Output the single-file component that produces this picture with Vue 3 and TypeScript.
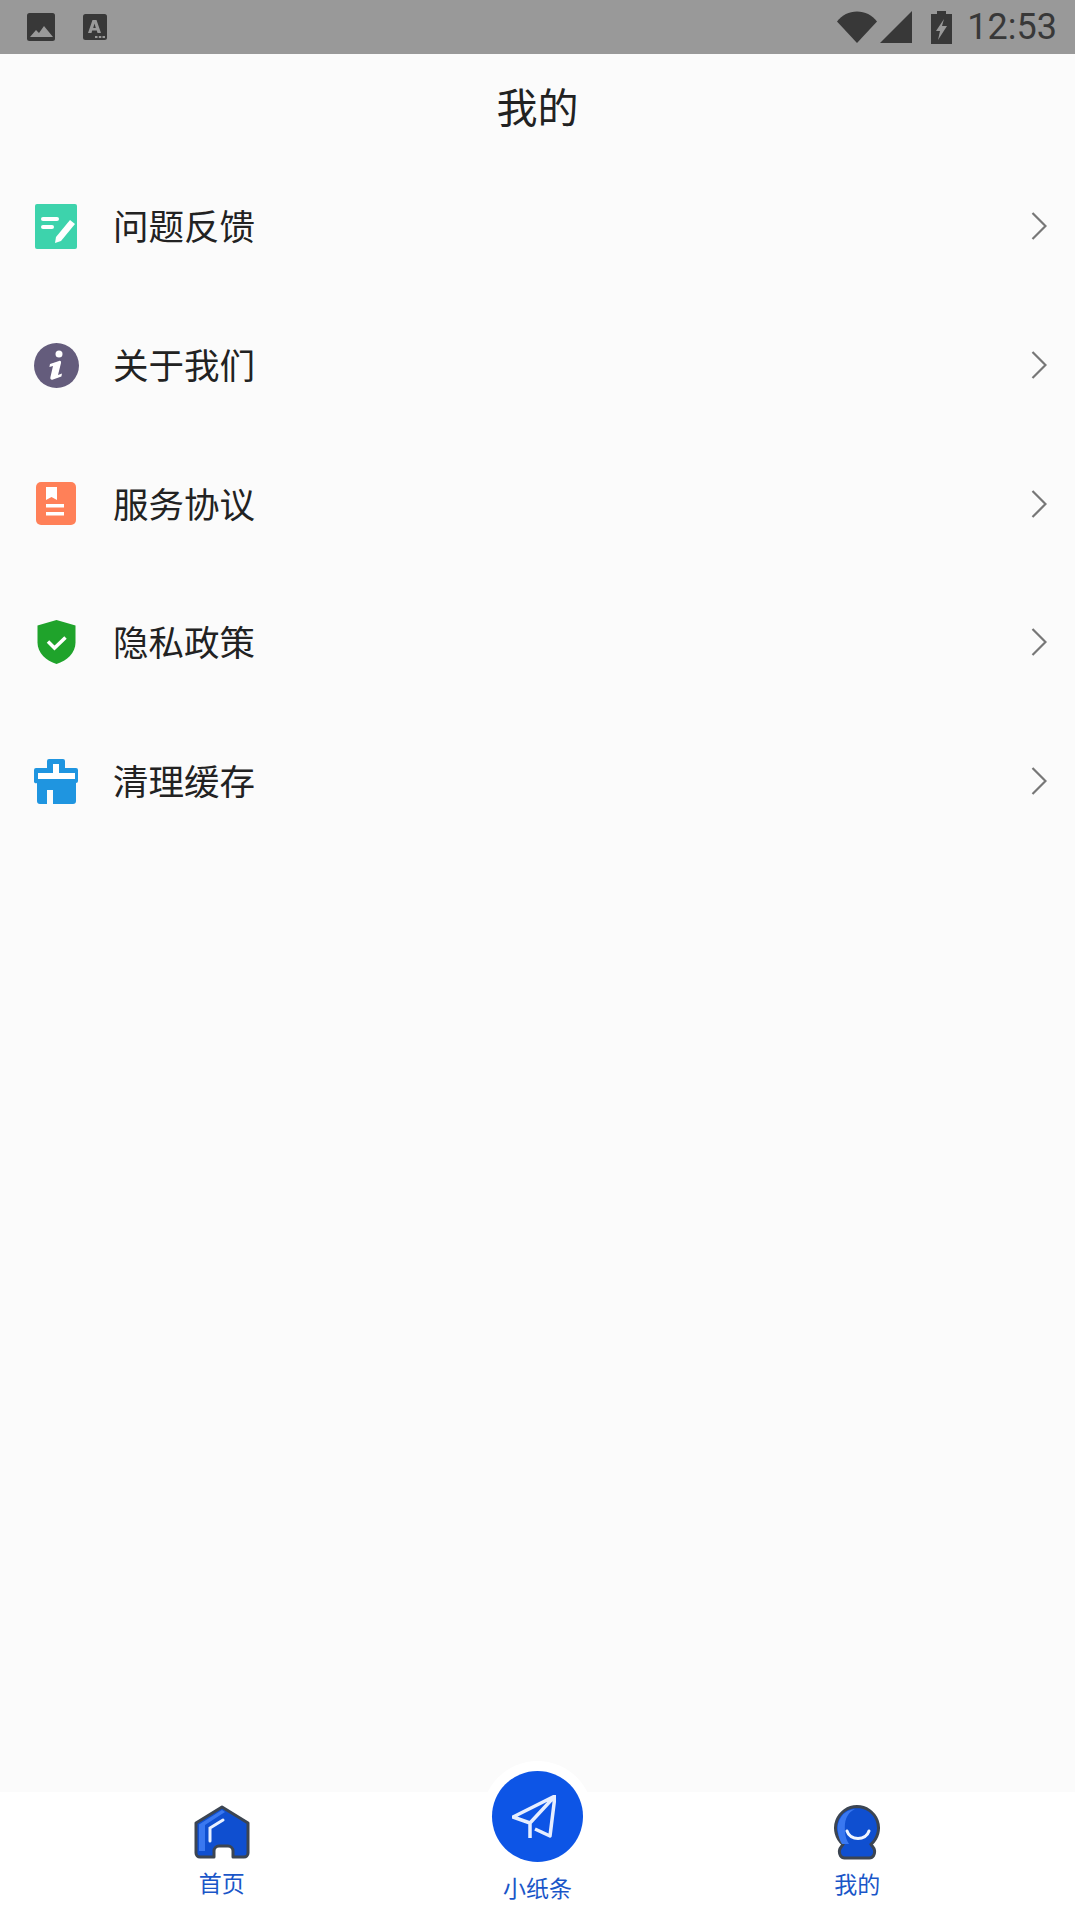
<script setup lang="ts">
const menu = [
  { key: 'feedback', label: '问题反馈' },
  { key: 'about', label: '关于我们' },
  { key: 'terms', label: '服务协议' },
  { key: 'privacy', label: '隐私政策' },
  { key: 'cache', label: '清理缓存' },
]
</script>

<template>
  <div class="page">
    <div class="status-bar">
      <div class="status-left">
        <svg width="28" height="28" viewBox="0 0 28 28">
          <rect width="28" height="28" rx="2.5" fill="#383838" />
          <path d="M3 24l6-7 3 3 5-7 9 11z" fill="#999" />
        </svg>
        <svg width="24" height="26" viewBox="0 0 24 26">
          <rect width="24" height="26" rx="2.5" fill="#383838" />
          <path d="M5 19L9.500 6h4L18 19h-3.500l-.7-2.500H9.200L8.500 19zM10.200 14h2.600l-1.300-4.500z" fill="#999" />
          <path d="M12 22h2.500v2H12zM15.800 22h2.500v2h-2.500zM19.500 22H22v2h-2.500z" fill="#999" />
        </svg>
      </div>
      <div class="status-right">
        <svg width="40" height="32" viewBox="0 0 40 32">
          <path d="M0 10.500C5 4 12 0.500 20 0.500S35 4 40 10.500L20 32z" fill="#383838" />
        </svg>
        <svg class="signal" width="32" height="32" viewBox="0 0 32 32">
          <path d="M32 0v32H0z" fill="#383838" />
        </svg>
        <svg class="battery" width="21" height="33" viewBox="0 0 21 33">
          <path d="M6 0h9v3h6v30H0V3h6z" fill="#383838" />
          <path d="M13 8L5 20h4L7 29l9-14h-5z" fill="#999" />
        </svg>
        <span class="time">12:53</span>
      </div>
    </div>

    <header class="title-bar">我的</header>

    <ul class="menu">
      <li v-for="item in menu" :key="item.key" class="menu-row">
        <span class="menu-icon">
          <svg v-if="item.key === 'feedback'" width="42" height="45" viewBox="0 0 42 45">
            <rect width="42" height="45" rx="2" fill="#3dd3ac" />
            <rect x="6" y="13" width="18" height="4" rx="2" fill="#fff" />
            <rect x="6" y="21" width="13" height="4" rx="2" fill="#fff" />
            <path d="M35 16l5 4-14 17-6 2 1-6z" fill="#fff" />
          </svg>
          <svg v-else-if="item.key === 'about'" width="45" height="45" viewBox="0 0 45 45">
            <circle cx="22.500" cy="22.500" r="22.500" fill="#645c7c" />
            <circle cx="25" cy="11" r="3.500" fill="#fff" />
            <path d="M16 21l9-3c1.500-.5 2.300.5 2 2l-3 12 4-1.500-.6 3-8.400 3c-2 .6-3-.4-2.600-2.200L19 23l-3.600 1z" fill="#fff" />
          </svg>
          <svg v-else-if="item.key === 'terms'" width="40" height="43" viewBox="0 0 40 43">
            <rect width="40" height="43" rx="5" fill="#ff8058" />
            <path d="M10 5h11v13l-5.500-3-5.500 3z" fill="#fff" />
            <rect x="10" y="22" width="18" height="3.500" fill="#fff" />
            <rect x="10" y="30" width="18" height="3.500" fill="#fff" />
          </svg>
          <svg v-else-if="item.key === 'privacy'" width="39" height="44" viewBox="0 0 39 44">
            <path d="M19.500 0l19 5.500v17C38.500 33 30 40.500 19.500 44 9 40.500 0.500 33 0.500 22.500v-17z" fill="#1fa32b" />
            <path d="M11 21.500l6.500 6.500 11-10.500" fill="none" stroke="#fff" stroke-width="3.500" />
          </svg>
          <svg v-else width="45" height="45" viewBox="0 0 45 45">
            <path d="M13 2a2 2 0 0 1 2-2h14a2 2 0 0 1 2 2v7h11a2 2 0 0 1 2 2v11a2 2 0 0 1-2 2v18a3 3 0 0 1-3 3H19V31h-6v14H6a3 3 0 0 1-3-3V24a2 2 0 0 1-3-2V11a2 2 0 0 1 2-2h11z" fill="#1f95e0" />
            <path d="M19 5h6v9h16v6H4v-6h15z" fill="#fff" />
          </svg>
        </span>
        <span class="menu-label">{{ item.label }}</span>
        <svg class="chevron" width="16" height="28" viewBox="0 0 16 28">
          <path d="M1.500 1l13 13-13 13" fill="none" stroke="#777" stroke-width="2.200" />
        </svg>
      </li>
    </ul>

    <nav class="tab-bar">
      <div class="tab">
        <svg width="56" height="54" viewBox="0 0 56 54">
          <path d="M28 2L54 18v30a4 4 0 0 1-4 4H39v-6a5 5 0 0 0-5-5h-9a5 5 0 0 0-5 5v6H6a4 4 0 0 1-4-4V18z" fill="#0f4fd0" stroke="#3c4552" stroke-width="3" stroke-linejoin="round" />
          <path d="M5 46V19.500L28 5l3 2L11 20v26z" fill="#3a78f0" />
          <path d="M16 36V23l13-8" fill="none" stroke="#e8f0ff" stroke-width="3" stroke-linecap="round" />
        </svg>
        <span class="tab-label">首页</span>
      </div>
      <div class="tab tab-center">
        <span class="send-halo">
          <span class="send-btn">
            <svg class="send-plane" width="44" height="44" viewBox="0 0 44 44">
              <path d="M43 1L1 22l17 6zM43 1L18 28v15M23 34l15 7L43 1" fill="none" stroke="#e6eeff" stroke-width="3.500" stroke-linejoin="round" />
            </svg>
          </span>
        </span>
        <span class="tab-label">小纸条</span>
      </div>
      <div class="tab">
        <svg width="46" height="55" viewBox="0 0 46 55">
          <path d="M23 1.500a21.500 21.500 0 0 1 14 37.800c1 2 3 3 3.500 6 .6 4-1.500 7.700-5 7.700h-25c-3.500 0-5.600-3.700-5-7.700.5-3 2.500-4 3.500-6A21.500 21.500 0 0 1 23 1.500z" fill="#0f4fd0" stroke="#3c4552" stroke-width="3" />
          <path d="M4 27A19 19 0 0 1 21 4c-8 4-11 11-10 23 .3 5 2 9 4 12l-7 0C6 36 4.500 32 4 27z" fill="#3a78f0" />
          <path d="M13 26c3 10 19 10 22 0" fill="none" stroke="#f2f6ff" stroke-width="3" stroke-linecap="round" />
        </svg>
        <span class="tab-label">我的</span>
      </div>
    </nav>
  </div>
</template>

<style>
body {
  background: #fbfbfb;
}
</style>

<style scoped>
.page {
  display: flex;
  flex-direction: column;
  height: 1915px;
  background: #fbfbfb;
  font-family: "Noto Sans CJK SC", "Liberation Sans", sans-serif;
  color: #222;
  overflow: hidden;
}
.status-bar {
  height: 54px;
  flex: none;
  display: flex;
  justify-content: space-between;
  background: #999;
  padding: 0 18px 0 27px;
}
.status-left {
  display: flex;
  align-items: center;
  gap: 28px;
}
.status-right {
  display: flex;
  align-items: center;
}
.signal {
  margin-left: 3px;
}
.battery {
  margin-left: 19px;
}
.time {
  margin-left: 15px;
  font-family: Roboto, sans-serif;
  font-size: 36px;
  color: #383838;
}
.title-bar {
  height: 103px;
  flex: none;
  display: flex;
  align-items: center;
  justify-content: center;
  padding-bottom: 2px;
  box-sizing: border-box;
  font-size: 41px;
}
.menu {
  flex: 1;
  margin: 0;
  padding: 0;
  list-style: none;
}
.menu-row {
  height: 138.7px;
  display: flex;
  align-items: center;
  padding: 0 28px 0 33px;
}
.menu-icon {
  width: 46px;
  flex: none;
  display: flex;
  justify-content: center;
}
.menu-label {
  flex: 1;
  margin-left: 34px;
  padding-bottom: 3px;
  font-size: 35.5px;
}
.tab-bar {
  height: 123px;
  flex: none;
  display: grid;
  grid-template-columns: repeat(3, 1fr);
  padding: 0 59px 0 63px;
  background: #fff;
}
.tab {
  display: flex;
  flex-direction: column;
  align-items: center;
  padding-top: 13px;
}
.tab-label {
  margin-top: 8px;
  font-size: 23px;
  line-height: 30px;
  color: #1a56c8;
}
.tab-center {
  padding-top: 0;
  padding-right: 4px;
}
.send-halo {
  margin-top: -31px;
  width: 111px;
  height: 111px;
  flex: none;
  display: flex;
  align-items: center;
  justify-content: center;
  border-radius: 50%;
  background: #fff;
}
.send-btn {
  width: 91px;
  height: 91px;
  display: flex;
  align-items: center;
  justify-content: center;
  border-radius: 50%;
  background: #0d55e6;
}
.send-plane {
  margin-right: 6px;
}
.tab-center .tab-label {
  margin-top: 0;
}
</style>
